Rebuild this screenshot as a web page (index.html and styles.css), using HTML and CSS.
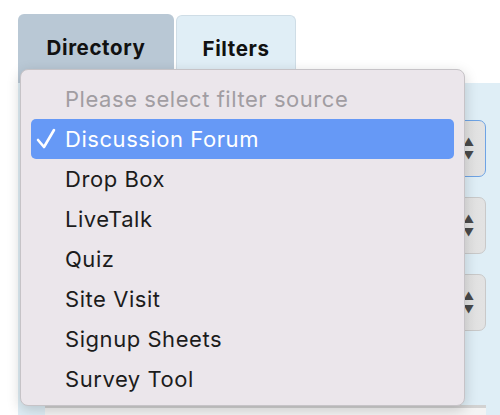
FILE: index.html
```html
<!DOCTYPE html>
<html lang="en">
<head>
    <meta charset="UTF-8">
    <meta name="viewport" content="width=device-width, initial-scale=1.0">
    <title>Filters</title>
    <link rel="stylesheet" href="styles.css">
</head>
<body>
    <div class="tabs">
        <div class="tab tab-directory">Directory</div>
        <div class="tab tab-filters">Filters</div>
    </div>

    <div class="panel">
        <div class="select select-focus"><span class="arrows">&#9650;<br>&#9660;</span></div>
        <div class="select"><span class="arrows">&#9650;<br>&#9660;</span></div>
        <div class="select"><span class="arrows">&#9650;<br>&#9660;</span></div>
        <div class="textbox"></div>
    </div>

    <ul class="menu">
        <li class="placeholder">Please select filter source</li>
        <li class="selected">
            <svg class="check" width="20" height="22" viewBox="0 0 20 22"><path d="M2 12 L8 19 L18 2" fill="none" stroke="#ffffff" stroke-width="2.6" stroke-linecap="round" stroke-linejoin="round"/></svg>
            Discussion Forum
        </li>
        <li>Drop Box</li>
        <li>LiveTalk</li>
        <li>Quiz</li>
        <li>Site Visit</li>
        <li>Signup Sheets</li>
        <li>Survey Tool</li>
    </ul>
</body>
</html>
```

FILE: styles.css
```css
body {
    margin: 0;
    background-color: #ffffff;
    font-family: Inter, "Noto Sans", sans-serif;
    width: 500px;
    height: 415px;
    overflow: hidden;
    position: relative;
}
.tabs {
    display: flex;
    gap: 2px;
    padding: 14px 0 0 18px;
    height: 83px;
    box-sizing: border-box;
    align-items: flex-start;
}
.tab {
    font-weight: 700;
    font-size: 20.5px;
    letter-spacing: 0.6px;
    color: #111;
    border-radius: 6px 6px 0 0;
    text-align: center;
    box-sizing: border-box;
    padding-top: 21px;
}
.tab-directory {
    width: 156px;
    height: 69px;
    background-color: #b9c8d5;
}
.tab-filters {
    width: 120px;
    height: 68px;
    margin-top: 1px;
    background-color: #e0eef6;
    border: 1px solid #cfdde6;
    border-bottom: none;
    padding-top: 20px;
}
.panel {
    margin: 0 0 0 18px;
    background-color: #dfeef6;
    padding: 37px 14px 0 27px;
    height: 332px;
    box-sizing: border-box;
    display: flex;
    flex-direction: column;
    gap: 20px;
}
.select {
    height: 57px;
    flex-shrink: 0;
    box-sizing: border-box;
    border: 1px solid #c9c9c9;
    border-radius: 7px;
    background: linear-gradient(to right, #f3f3f3, #e2e2e2);
    display: flex;
    justify-content: flex-end;
    align-items: center;
    padding-right: 11px;
}
.select-focus {
    border: 1px solid #6ea3e4;
}
.arrows {
    font-size: 11px;
    line-height: 13px;
    color: #4a4a4a;
    text-align: center;
}
.textbox {
    margin-top: 54px;
    height: 20px;
    flex-shrink: 0;
    border-top: 3px solid #d2d2d2;
    background-color: #f4f4f4;
}
.menu {
    position: absolute;
    left: 20px;
    top: 69px;
    width: 445px;
    height: 337px;
    box-sizing: border-box;
    margin: 0;
    padding: 9px 10px;
    list-style: none;
    background-color: #ebe6eb;
    border: 1px solid #c6c3c7;
    border-radius: 8px;
    box-shadow: 0 4px 14px rgba(0, 0, 0, 0.18);
}
.menu li {
    height: 40px;
    line-height: 40px;
    font-size: 22px;
    letter-spacing: 0.55px;
    color: #1c1c1c;
    padding-left: 34px;
    border-radius: 5px;
    white-space: nowrap;
}
.menu .placeholder {
    color: #a19da2;
}
.menu .selected {
    background-color: #6699f6;
    color: #ffffff;
    position: relative;
}
.check {
    position: absolute;
    left: 5px;
    top: 9px;
}
```
